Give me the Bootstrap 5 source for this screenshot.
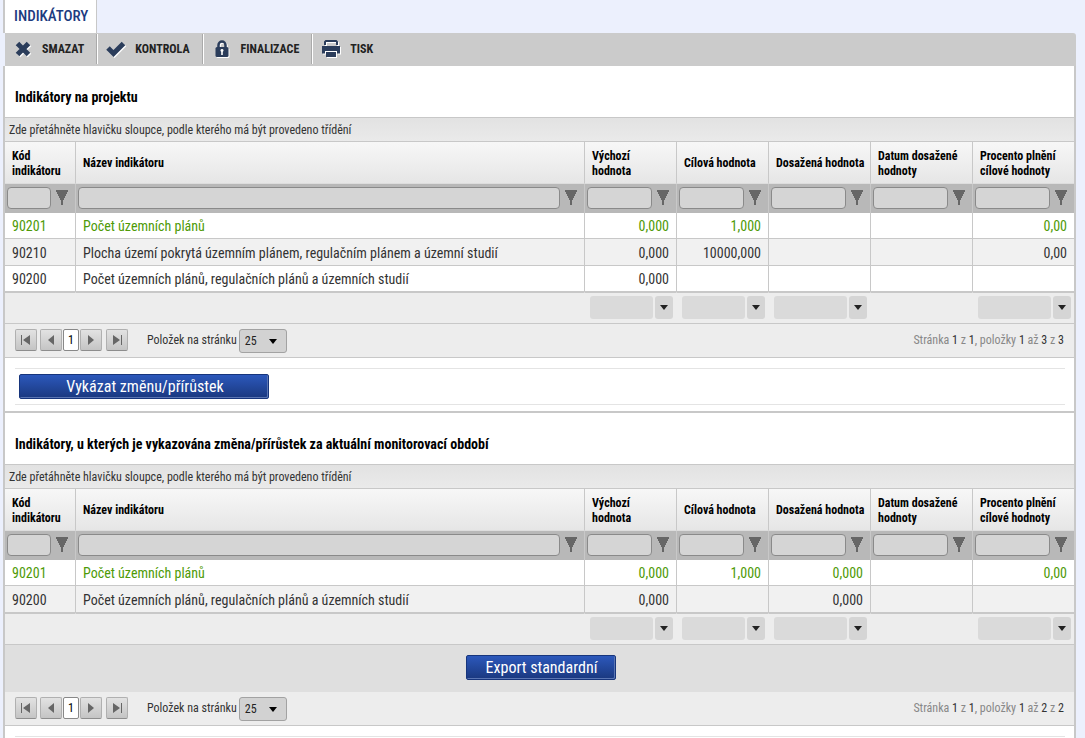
<!DOCTYPE html>
<html lang="cs">
<head>
<meta charset="utf-8">
<meta name="viewport" content="width=device-width, initial-scale=1">
<title>Indikátory</title>
<link href="https://cdn.jsdelivr.net/npm/bootstrap@5.3.0/dist/css/bootstrap.min.css" rel="stylesheet">
<style>
  :root { --line: #c8c8c8; --ink: #333; --navy: #2b3d5b; }
  body { font-family: "Roboto Condensed", Roboto, sans-serif; font-size: 14px; line-height: 18px; color: var(--ink); background: #ecf0fd; overflow: hidden; }
  .page-shell { margin: 0 9px 0 3px; }

  .page-tabs { height: 33px; }
  .page-tabs .nav-link { padding: 7px 8px 7px 9px; background: #fff; border: solid var(--line); border-width: 0 1px 0 2px; border-radius: 0; color: #1d3b7f; font-size: 15px; font-weight: 500; }

  .toolbar { margin-left: 2px; height: 33px; padding: 1px 0 2px; background: #cbcbcb; border-radius: 0 3px 0 0; }
  .tool-btn { display: flex; align-items: center; gap: 9px; padding: 0 12px 0 8px; border: 0; background: none; color: #222; font-size: 12px; font-weight: 700; }
  .tool-btn + .tool-btn { border-left: 1px solid #fff; }
  .tool-btn:not(:last-child) { border-right: 1px solid #aaa; }
  .tool-btn svg { width: 20px; height: 20px; filter: drop-shadow(1px 1px 0 #fff); }

  .panel { border: solid var(--line); border-width: 0 2px; background: #fff; }
  .panel-title { margin: 0; padding: 22px 10px 11px; font-size: 14px; line-height: 18px; font-weight: 700; color: #000; }
  .group-bar { height: 24px; padding: 3px 4px 0; border-top: 1px solid var(--line); background: linear-gradient(#e2e2e2, #eaeaea); font-size: 12px; }

  .grid { width: 100%; table-layout: fixed; border-collapse: separate; border-spacing: 0; }
  .grid th, .grid td { border-left: 1px solid var(--line); padding: 0 7px; vertical-align: middle; }
  .grid tr > :first-child { border-left: 0; }
  .c-code { width: 70px; } .c-num { width: 92px; } .c-wide { width: 102px; }
  .grid .head-row th { height: 43px; padding: 2px 4px 0 7px; border-top: 1px solid var(--line); border-bottom: 1px solid #ddd; background: linear-gradient(#f7f7f7, #e6e6e6); font-size: 12px; line-height: 15px; font-weight: 700; color: #000; }
  .grid .filter-row td { height: 29px; padding: 0 7px 2px 2px; background: #b8b8b8; }
  .filter-cell { display: flex; align-items: center; gap: 5px; }
  .filter-cell input { flex: 1; min-width: 0; height: 22px; padding: 0 4px; border: 1px solid #8a8a8a; border-radius: 4px; background: #d5d5d5; }
  .icon-btn { display: flex; padding: 0; border: 0; background: none; }
  .data-row td { height: 26px; border-bottom: 1px solid var(--line); background: #fff; }
  .grid .data-row.alt td { height: 27px; padding-top: 2px; background: #f1f1f1; }
  .data-row.fresh td { color: #4e9a06; }
  .grid .foot-row td { height: 31px; padding: 0 3px 2px 5px; border-top: 1px solid var(--line); border-left-color: transparent; background: #ededed; }
  .sum-box { display: flex; gap: 2px; }
  .sum-box input { flex: 1; min-width: 0; height: 23px; border: 0; border-radius: 3px; background: #dadada; }
  .sum-box button { display: flex; align-items: center; justify-content: center; width: 18px; height: 23px; padding: 0; border: 0; border-radius: 3px; background: #d5d5d5; }

  .pager { height: 34px; padding: 5px 10px 0; gap: 1px; background: #ededed; border-bottom: 1px solid var(--line); font-size: 12px; line-height: 22px; }
  .line-top { border-top: 1px solid var(--line); height: 35px; }
  .page-btn { display: flex; align-items: center; justify-content: center; width: 22px; height: 22px; padding: 0; border: 1px solid #b0b0b0; border-bottom-color: #8d8d8d; border-radius: 2px; background: linear-gradient(#e2e2e2, #c4c4c4); }
  .page-first { margin-right: 2px; } .page-last { margin-left: 3px; }
  .page-now { width: 16px; border-color: #888; background: #fff; color: #000; font-size: 12px; font-weight: 400; }
  .size-label { margin: 0 1px 0 18px; }
  .size-select { width: 48px; height: 24px; padding: 0 5px; border: 1px solid #a2a2a2; border-radius: 3px; appearance: none; color: #222; font-size: 12px; background: #d2d2d2 url("data:image/svg+xml,%3Csvg xmlns='http://www.w3.org/2000/svg' width='8' height='5'%3E%3Cpath d='M0 0h8L4 5z'/%3E%3C/svg%3E") no-repeat right 9px center; }
  .page-info { color: #888; }
  .page-info span { color: #333; }

  .action-bar { margin: 10px 9px 6px 10px; padding: 5px 4px; border: solid #e4e4e4; border-width: 1px 0; }
  .btn-navy { height: 25px; padding: 0; border: 1px solid #17357c; border-radius: 2px; background: linear-gradient(#2c58bb, #1a387f); box-shadow: inset -1px -1px 0 #5a75b3; color: #fff; font-size: 16px; line-height: 24px; }
  .btn-navy:hover { background: #2c58bb; color: #fff; }
  .w-report { width: 250px; padding-left: 2px; } .w-export { width: 150px; padding-left: 2px; }
  .section-rule { border-top: 2px solid var(--line); }
  .export-bar { height: 48px; padding: 10px 0 0 2px; border-top: 1px solid var(--line); background: #dfdfdf; }
</style>
</head>
<body>
<svg class="d-none" xmlns="http://www.w3.org/2000/svg">
  <symbol id="i-funnel" viewBox="0 0 12 16"><path fill="#666" d="M0 0h12v2h-1v2h-1v2H9v2H8v2H7v5H5v-5H4V8H3V6H2V4H1V2H0z"/></symbol>
  <symbol id="i-caret" viewBox="0 0 8 5"><path fill="#222" d="M0 0h8L4 5z"/></symbol>
</svg>

<div class="page-shell">
  <nav class="nav page-tabs"><a class="nav-link" href="#">INDIKÁTORY</a></nav>

  <div class="toolbar d-flex">
    <button class="tool-btn" type="button"><svg viewBox="0 0 20 20"><path fill="none" stroke="#2b3d5b" stroke-width="5" d="m4.500 4.500 11 11m0-11-11 11"/></svg>SMAZAT</button>
    <button class="tool-btn" type="button"><svg viewBox="0 0 20 20"><path fill="none" stroke="#2b3d5b" stroke-width="5" d="m2 9 5.500 5.500L17.500 4.500"/></svg>KONTROLA</button>
    <button class="tool-btn" type="button"><svg viewBox="0 0 20 20"><path fill="none" stroke="#2b3d5b" stroke-width="2.500" d="M6.500 9V6a3.500 3.500 0 0 1 7 0v3"/><rect x="3.500" y="8" width="13" height="10" rx="1.500" fill="#2b3d5b"/><path fill="#fff" d="M10 10a1.500 1.500 0 0 1 .8 2.800V16H9.200v-3.200A1.500 1.500 0 0 1 10 10z"/></svg>FINALIZACE</button>
    <button class="tool-btn" type="button"><svg viewBox="0 0 20 20"><path fill="#2b3d5b" d="M3 2.500 4.500 1h11L17 2.500V6h-2V3H5v3H3z"/><path fill="#2b3d5b" d="M1 7h18v7.500h-3V12H4v2.500H1z"/><path fill="#2b3d5b" d="M5 13h10v5H5z"/><path stroke="#fff" d="M4 12.500h12"/></svg>TISK</button>
  </div>

  <main class="panel">
    <section id="project"></section>
    <div class="section-rule"></div>
    <section id="period"></section>
  </main>
</div>

<script src="https://cdn.jsdelivr.net/npm/bootstrap@5.3.0/dist/js/bootstrap.bundle.min.js"></script>
<script>
  const columns = [
    { label: 'Kód indikátoru', cls: 'c-code' },
    { label: 'Název indikátoru', cls: '' },
    { label: 'Výchozí hodnota', cls: 'c-num', sum: true },
    { label: 'Cílová hodnota', cls: 'c-num', sum: true },
    { label: 'Dosažená hodnota', cls: 'c-wide', sum: true },
    { label: 'Datum dosažené hodnoty', cls: 'c-wide' },
    { label: 'Procento plnění cílové hodnoty', cls: 'c-wide', sum: true }
  ];
  const funnel = '<svg width="12" height="16"><use href="#i-funnel"/></svg>';
  const caret = '<svg width="8" height="5"><use href="#i-caret"/></svg>';
  const arrows = {
    first: 'M2 2h1v10H2zM11 2v10L4 7z', prev: 'M10 2v10L4 7z',
    next: 'M4 2v10l6-5z', last: 'M11 2h1v10h-1zM3 2v10l7-5z'
  };
  const pageBtn = (kind, label) =>
    `<button class="page-btn page-${kind}" type="button" aria-label="${label}"><svg width="14" height="14"><path fill="#666" d="${arrows[kind]}"/></svg></button>`;
  const heading = label => label.replace('Výchozí ', 'Výchozí<br>');

  const table = rows => `
    <div class="group-bar">Zde přetáhněte hlavičku sloupce, podle kterého má být provedeno třídění</div>
    <table class="grid">
      <colgroup>${columns.map(c => `<col class="${c.cls}">`).join('')}</colgroup>
      <thead>
        <tr class="head-row">${columns.map(c => `<th scope="col">${heading(c.label)}</th>`).join('')}</tr>
        <tr class="filter-row">${columns.map(c => `<td><div class="filter-cell"><input type="text" aria-label="Filtr: ${c.label}"><button class="icon-btn" type="button" aria-label="Filtrovat: ${c.label}">${funnel}</button></div></td>`).join('')}</tr>
      </thead>
      <tbody>${rows.map((r, i) => `<tr class="data-row ${i % 2 ? 'alt' : ''} ${i ? '' : 'fresh'}">${r.map((v, k) => `<td class="${k > 1 ? 'text-end' : ''}">${v}</td>`).join('')}</tr>`).join('')}</tbody>
      <tfoot><tr class="foot-row">${columns.map(c => `<td>${c.sum ? `<div class="sum-box"><input type="text" aria-label="Souhrn: ${c.label}"><button type="button" aria-label="Zvolit souhrn: ${c.label}">${caret}</button></div>` : ''}</td>`).join('')}</tr></tfoot>
    </table>`;

  const pager = (id, count, extra) => `
    <div class="pager ${extra} d-flex align-items-start">
      ${pageBtn('first', 'První')}${pageBtn('prev', 'Předchozí')}
      <button class="page-btn page-now" type="button">1</button>
      ${pageBtn('next', 'Další')}${pageBtn('last', 'Poslední')}
      <label class="size-label" for="${id}">Položek na stránku</label>
      <select class="size-select" id="${id}"><option>25</option><option>50</option></select>
      <div class="page-info ms-auto">Stránka <span>1</span> z <span>1</span>, položky <span>1</span> až <span>${count}</span> z <span>${count}</span></div>
    </div>`;

  document.getElementById('project').innerHTML =
    '<h2 class="panel-title">Indikátory na projektu</h2>' +
    table([
      ['90201', 'Počet územních plánů', '0,000', '1,000', '', '', '0,00'],
      ['90210', 'Plocha území pokrytá územním plánem, regulačním plánem a územní studií', '0,000', '10000,000', '', '', '0,00'],
      ['90200', 'Počet územních plánů, regulačních plánů a územních studií', '0,000', '', '', '', '']
    ]) + pager('size-project', 3, 'line-top') +
    '<div class="action-bar"><button class="btn btn-navy w-report d-block" type="button">Vykázat změnu/přírůstek</button></div>';

  document.getElementById('period').innerHTML =
    '<h2 class="panel-title">Indikátory, u kterých je vykazována změna/přírůstek za aktuální monitorovací období</h2>' +
    table([
      ['90201', 'Počet územních plánů', '0,000', '1,000', '0,000', '', '0,00'],
      ['90200', 'Počet územních plánů, regulačních plánů a územních studií', '0,000', '', '0,000', '', '']
    ]) +
    '<div class="export-bar text-center"><button class="btn btn-navy w-export" type="button">Export standardní</button></div>' +
    pager('size-period', 2, '') +
    '<div class="action-bar"></div>';
</script>
</body>
</html>
